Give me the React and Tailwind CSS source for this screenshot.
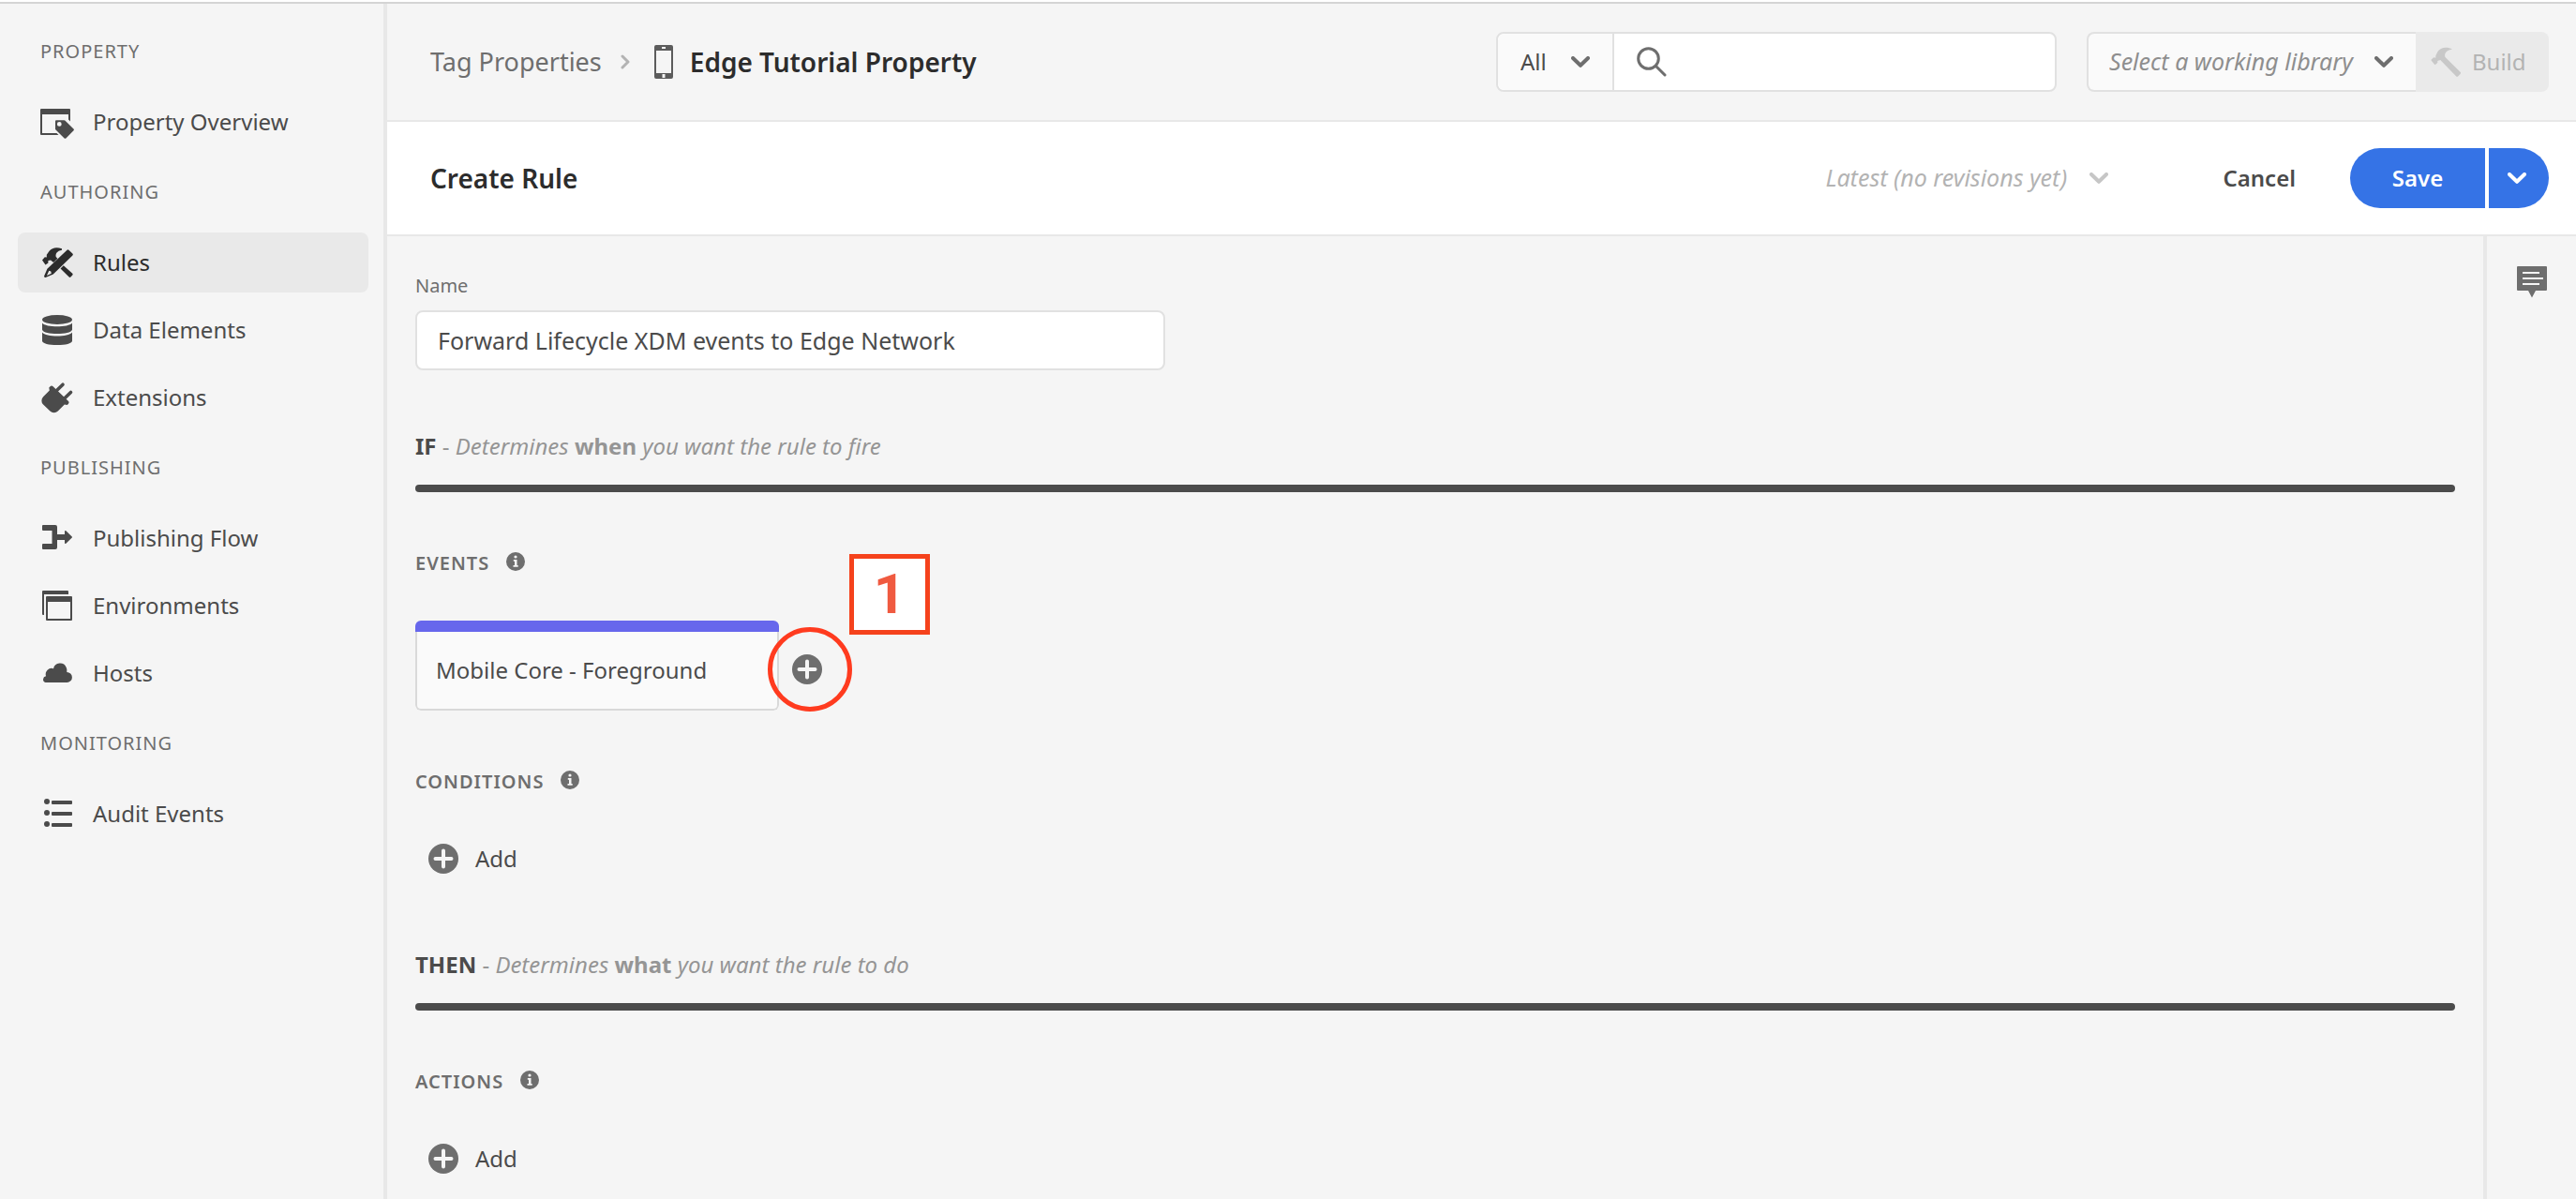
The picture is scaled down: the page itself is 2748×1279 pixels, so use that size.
import React from "react";

function Icon({ children, className = "size-9" }) {
  return (
    <svg viewBox="0 0 36 36" fill="currentColor" aria-hidden="true" className={`${className} shrink-0`}>
      {children}
    </svg>
  );
}

const OverviewIcon = () => (
  <Icon>
    <path d="M0 5a1 1 0 0 1 1-1h30a1 1 0 0 1 1 1v12.5l-2-2V10H2v20h15.5l2 2H1a1 1 0 0 1-1-1z" />
    <path
      fillRule="evenodd"
      d="M17 16.2h8.2a1.6 1.6 0 0 1 1.1.4l9.2 8.8a1.3 1.3 0 0 1 0 1.8l-8.1 8.2a1.3 1.3 0 0 1-1.8 0l-9.1-8.9a1.6 1.6 0 0 1-.5-1.1v-8.2a1 1 0 0 1 1-1zm3.3 1.8a2.4 2.4 0 1 0 0 4.8 2.4 2.4 0 0 0 0-4.8z"
    />
  </Icon>
);

const RulesIcon = () => (
  <Icon>
    <path d="M23 3.2C17.5 1.2 12.500 2 9.600 5.800L6.800 9.800v2.800l-2-.4L2 15.500l3.500 4.900 2.900-2v-2.300l2.700-.6 3 2.400 4.300-4.200-1.700-1.600c-.7-3.200.900-6.300 6.300-7.300z" />
    <path
      fillRule="evenodd"
      d="M28.500 4.700a1.300 1.300 0 0 1 1.900 0l4 3.900a1.300 1.300 0 0 1 0 1.900L13.800 30.500 5.600 33.900a1.200 1.200 0 0 1-1.500-1.500l3.300-7.700zM9.300 26.800l-2.400 5.100 4.900-2.200-.5-2.200z"
    />
    <path d="M24.800 21.200l9.500 8.600a1.200 1.200 0 0 1 0 1.700l-1.900 2a1.200 1.200 0 0 1-1.700 0l-9.200-9z" />
  </Icon>
);

const DataIcon = () => (
  <Icon>
    <ellipse cx="18" cy="7" rx="16" ry="5" />
    <path d="M2 10.400C4 13 11 14.200 18 14.200s14-1.200 16-3.800v7.300C33 20.600 26 22 18 22S3 20.600 2 17.700z" />
    <path d="M2 20.400C4 23.200 11 24.500 18 24.500s14-1.300 16-4.100v9.300C33.500 32.500 27 34 18 34S2.500 32.500 2 29.700z" />
  </Icon>
);

const PlugIcon = () => (
  <Icon>
    <path d="M10.500 6.200a2.200 2.200 0 0 1 3.100 0l16.200 15.600a2.200 2.200 0 0 1 0 3.100l-1.200 1.200-2.800-.6-7 7a6 6 0 0 1-8.400.1l-7.300-7a6 6 0 0 1 0-8.400l6.700-6.700-.5-3z" />
    <path d="M17.500 10.500l6.500-6.300M26 18.800l6.500-6.300" fill="none" stroke="currentColor" strokeWidth="3.600" strokeLinecap="round" />
  </Icon>
);

const FlowIcon = () => (
  <Icon>
    <path d="M3 4h13a2 2 0 0 1 2 2v8h8v-3.200c0-.8.9-1.100 1.400-.5l6.400 6.200a.7.7 0 0 1 0 1l-6.400 6.300c-.5.500-1.400.2-1.400-.6V20h-8v8a2 2 0 0 1-2 2H3a1 1 0 0 1-1-1v-4a1 1 0 0 1 1-1h9.500V10H3a1 1 0 0 1-1-1V5a1 1 0 0 1 1-1z" />
  </Icon>
);

const EnvironmentsIcon = () => (
  <Icon>
    <path d="M3 2h26a1 1 0 0 1 1 1v3H4v22H3a1 1 0 0 1-1-1V3a1 1 0 0 1 1-1z" />
    <path fillRule="evenodd" d="M7 8h26a1 1 0 0 1 1 1v24a1 1 0 0 1-1 1H7a1 1 0 0 1-1-1V9a1 1 0 0 1 1-1zm1 6v18h24V14z" />
  </Icon>
);

const CloudIcon = () => (
  <Icon>
    <path d="M28.300 17a7 7 0 0 0-.6-5A7.200 7.200 0 0 0 14 13.200a6.400 6.400 0 0 0-8 8A3.500 3.500 0 0 0 5.500 28h23a5.500 5.500 0 1 0-.2-11z" />
  </Icon>
);

const AuditIcon = () => (
  <Icon>
    {[5, 17, 29].map((y) => (
      <g key={y}>
        <circle cx="7" cy={y} r="3" />
        <rect x="12" y={y - 1} width="22" height="4" rx="1" />
      </g>
    ))}
  </Icon>
);

const HammerIcon = () => (
  <svg viewBox="0 0 32 32" fill="currentColor" aria-hidden="true" className="size-8 shrink-0">
    <path d="M23 2.600C17-1 10 .700 7.200 5.500L5.300 9.500v2.300l-2.100-.5L.200 14l4.300 5.200 2.800-2.200v-2.100l3-.8L27 31.200a1.600 1.600 0 0 0 2.300 0l2.200-2.200a1.600 1.600 0 0 0 0-2.300L15.300 10.700C14.400 7 16.500 3.800 23 2.600z" />
  </svg>
);

const PhoneIcon = () => (
  <svg viewBox="0 0 20 36" fill="currentColor" aria-hidden="true" className="h-9 w-5 shrink-0 text-[#5c5c5c]">
    <path
      fillRule="evenodd"
      d="M2 0h16a2 2 0 0 1 2 2v32a2 2 0 0 1-2 2H2a2 2 0 0 1-2-2V2a2 2 0 0 1 2-2zm0 6v24h16V6zm6-4v2h4V2zm.5 29v4h3v-4z"
    />
  </svg>
);

const Chevron = ({ className = "" }) => (
  <svg viewBox="0 0 20 12" fill="none" stroke="currentColor" strokeWidth="4" strokeLinecap="round" strokeLinejoin="round" aria-hidden="true" className={`h-3 w-5 shrink-0 ${className}`}>
    <path d="M2 2l8 7.800L18 2" />
  </svg>
);

const PlusIcon = () => (
  <svg viewBox="0 0 32 32" aria-hidden="true" className="size-8 shrink-0">
    <circle cx="16" cy="16" r="16" fill="#6e6e6e" />
    <path d="M16 7.500v17M7.500 16h17" stroke="#f5f5f5" strokeWidth="4" strokeLinecap="round" />
  </svg>
);

const InfoIcon = () => (
  <svg viewBox="0 0 20 20" aria-hidden="true" className="size-5 shrink-0">
    <circle cx="10" cy="10" r="10" fill="#6e6e6e" />
    <circle cx="10" cy="5" r="1.600" fill="#f5f5f5" />
    <path d="M7.800 8h3.700v6h1.200v1.800H7.500V14H9V9.700H7.800z" fill="#f5f5f5" />
  </svg>
);

const nav = [
  { title: "PROPERTY", items: [["Property Overview", OverviewIcon]] },
  { title: "AUTHORING", items: [["Rules", RulesIcon], ["Data Elements", DataIcon], ["Extensions", PlugIcon]] },
  { title: "PUBLISHING", items: [["Publishing Flow", FlowIcon], ["Environments", EnvironmentsIcon], ["Hosts", CloudIcon]] },
  { title: "MONITORING", items: [["Audit Events", AuditIcon]] },
];

function Sidebar() {
  return (
    <nav className="w-[413px] shrink-0 border-r-4 border-[#e8e8e8] pl-[19px] pr-4 pt-2">
      {nav.map((section) => (
        <section key={section.title}>
          <h2 className="flex h-[86px] items-center pl-6 text-xl tracking-wider text-[#6e6e6e]">{section.title}</h2>
          <ul className="flex flex-col gap-2">
            {section.items.map(([label, Glyph]) => {
              const active = label === "Rules";
              return (
                <li key={label}>
                  <a
                    href="#"
                    aria-current={active ? "page" : undefined}
                    className={`flex h-16 items-center gap-5 rounded-lg pl-6 text-2xl ${active ? "bg-[#e9e9e9] text-[#2c2c2c]" : "text-[#4b4b4b]"}`}
                  >
                    <Glyph />
                    {label}
                  </a>
                </li>
              );
            })}
          </ul>
        </section>
      ))}
    </nav>
  );
}

function Header() {
  return (
    <header className="flex h-[126px] items-center border-b-2 border-[#e8e8e8] pl-[46px] pr-[29px]">
      <div className="flex items-center whitespace-nowrap">
        <a href="#" className="text-[27px] text-[#6e6e6e]">Tag Properties</a>
        <svg viewBox="0 0 10 16" fill="none" stroke="#b3b3b3" strokeWidth="3" strokeLinecap="round" strokeLinejoin="round" aria-hidden="true" className="ml-5 mr-[26px] h-4 w-2.5">
          <path d="M2 2l6 6-6 6" />
        </svg>
        <PhoneIcon />
        <span className="ml-[18px] text-[28px] font-semibold text-[#2c2c2c]">Edge Tutorial Property</span>
      </div>

      <div className="ml-auto flex h-16 w-[598px] rounded-lg border-2 border-[#e1e1e1] bg-white">
        <div className="relative w-[124px] border-r-2 border-[#e1e1e1]">
          <select aria-label="Search scope" className="size-full appearance-none rounded-l-lg bg-[#fafafa] pl-6 text-2xl text-[#4b4b4b]">
            <option>All</option>
          </select>
          <Chevron className="pointer-events-none absolute right-6 top-6 text-[#6e6e6e]" />
        </div>
        <label className="flex flex-1 items-center gap-4 pl-6 text-[#6e6e6e]">
          <svg viewBox="0 0 32 32" fill="none" stroke="currentColor" strokeWidth="3" strokeLinecap="round" aria-hidden="true" className="size-8 shrink-0">
            <circle cx="12.500" cy="12.500" r="10.800" />
            <path d="M20.500 20.500l9.500 9.500" />
          </svg>
          <input type="search" aria-label="Search" className="h-full w-full min-w-0 rounded-r-lg bg-transparent text-2xl outline-none" />
        </label>
      </div>

      <div className="ml-8 flex h-16">
        <div className="relative w-[351px]">
          <select aria-label="Working library" className="size-full appearance-none rounded-l-lg border-2 border-r-0 border-[#e1e1e1] bg-[#fafafa] pl-[22px] text-[25px] italic text-[#8e8e8e]">
            <option>Select a working library</option>
          </select>
          <Chevron className="pointer-events-none absolute right-6 top-[26px] text-[#6e6e6e]" />
        </div>
        <button type="button" disabled className="flex w-[142px] items-center gap-3 rounded-r-lg bg-[#eaeaea] pl-4 text-2xl text-[#b3b3b3]">
          <span className="text-[#c8c8c8]"><HammerIcon /></span>
          Build
        </button>
      </div>
    </header>
  );
}

function TitleBar() {
  return (
    <div className="flex h-[122px] items-center border-b-2 border-[#e8e8e8] bg-white pl-[46px] pr-[29px]">
      <h1 className="text-[28px] font-semibold text-[#2c2c2c]">Create Rule</h1>
      <div className="relative ml-auto mr-[90px] w-[302px]">
        <select aria-label="Revision" disabled className="h-16 w-full appearance-none bg-transparent text-[25px] italic text-[#b3b3b3] opacity-100">
          <option>Latest (no revisions yet)</option>
        </select>
        <Chevron className="pointer-events-none absolute right-0 top-[26px] text-[#c6c6c6]" />
      </div>
      <button type="button" className="mr-[26px] h-16 px-8 text-2xl font-semibold text-[#4b4b4b]">Cancel</button>
      <div className="flex gap-1">
        <button type="button" className="h-16 w-36 rounded-l-full bg-[#3573e6] text-2xl font-semibold text-white">Save</button>
        <button type="button" aria-label="More save options" className="flex h-16 w-16 items-center justify-center rounded-r-full bg-[#3573e6] pr-1 text-white">
          <Chevron />
        </button>
      </div>
    </div>
  );
}

function Stage({ name, verb, rest, children }) {
  return (
    <section className="pt-[65px]">
      <h2 className="mb-[25px] text-2xl/8 font-normal text-[#959595]">
        <strong className="font-bold text-[#4b4b4b]">{name}</strong> - <em>Determines</em>{" "}
        <strong className="font-bold">{verb}</strong> <em>{rest}</em>
      </h2>
      <div className="h-2 rounded-full bg-[#4b4b4b]" />
      {children}
    </section>
  );
}

function GroupHeading({ children }) {
  return (
    <div className="flex gap-[18px] pt-[62px]">
      <h3 className="text-xl/7 font-semibold tracking-wider text-[#6e6e6e]">{children}</h3>
      <button type="button" aria-label="About this group" className="mt-0.5 size-5">
        <InfoIcon />
      </button>
    </div>
  );
}

function AddButton() {
  return (
    <button type="button" className="mt-9 flex h-16 items-center gap-[18px] px-3.5 text-2xl text-[#4b4b4b]">
      <PlusIcon />
      Add
    </button>
  );
}

export default function App() {
  return (
    <div className="flex min-h-screen flex-col bg-[#f5f5f5] font-['Noto_Sans',sans-serif]">
      <div className="h-1 border-b-2 border-t-2 border-b-[#d4d4d4] border-t-white" />
      <div className="flex flex-1">
        <Sidebar />
        <div className="flex min-w-0 flex-1 flex-col">
          <Header />
          <TitleBar />
          <div className="flex flex-1">
            <main className="min-w-0 flex-1 px-[30px] pb-2 pt-[37px]">
              <label htmlFor="rule-name" className="mb-2.5 block text-xl/8 text-[#6e6e6e]">Name</label>
              <input
                id="rule-name"
                type="text"
                defaultValue="Forward Lifecycle XDM events to Edge Network"
                className="block h-16 w-full max-w-[800px] rounded-lg border-2 border-[#e1e1e1] bg-white px-[22px] text-[25px] text-[#4b4b4b]"
              />

              <Stage name="IF" verb="when" rest="you want the rule to fire">
                <GroupHeading>EVENTS</GroupHeading>
                <div className="mt-[47px] flex gap-3.5">
                  <button type="button" className="flex h-24 w-[388px] flex-col overflow-hidden rounded-md text-2xl text-[#4b4b4b]">
                    <span className="h-3 w-full bg-[#6767ec]" />
                    <span className="flex w-full flex-1 items-center rounded-b-md border-2 border-t-0 border-[#d9d9d9] bg-[#fafafa] px-5">
                      Mobile Core - Foreground
                    </span>
                  </button>
                  <div className="flex items-center pt-2">
                    <div className="relative size-8">
                      <button type="button" aria-label="Add event" className="block">
                        <PlusIcon />
                      </button>
                      <span className="pointer-events-none absolute -left-[26px] -top-[29px] size-[90px] rounded-full border-[5px] border-[#ff3b1f]" />
                      <span className="absolute -top-[107px] left-[61px] flex size-[86px] items-center justify-center border-[5px] border-[#f5421c] bg-white font-[Roboto,sans-serif] text-6xl font-bold text-[#f05a40]">
                        1
                      </span>
                    </div>
                  </div>
                </div>
                <GroupHeading>CONDITIONS</GroupHeading>
                <AddButton />
              </Stage>

              <Stage name="THEN" verb="what" rest="you want the rule to do">
                <GroupHeading>ACTIONS</GroupHeading>
                <AddButton />
              </Stage>
            </main>
            <aside className="w-[99px] shrink-0 border-l-4 border-[#e8e8e8] pl-8 pt-8">
              <button type="button" aria-label="Notes" className="block text-[#6e6e6e]">
                <svg viewBox="0 0 32 34" fill="currentColor" aria-hidden="true" className="h-[34px] w-8">
                  <path
                    fillRule="evenodd"
                    d="M1 0h30a1 1 0 0 1 1 1v24a1 1 0 0 1-1 1H20l-4 7.500L12 26H1a1 1 0 0 1-1-1V1a1 1 0 0 1 1-1zm5 6v2h18V6zm0 6v2h22v-2zm0 6v2h18v-2z"
                  />
                </svg>
              </button>
            </aside>
          </div>
        </div>
      </div>
    </div>
  );
}
